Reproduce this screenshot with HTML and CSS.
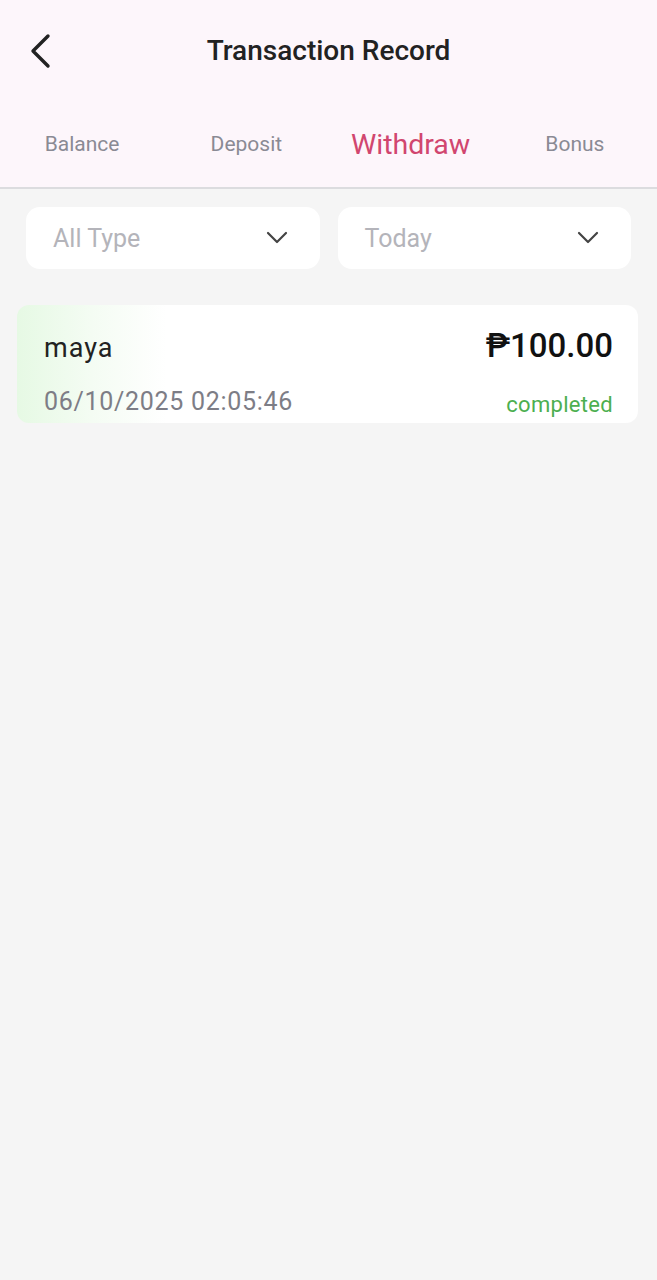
FILE: index.html
```html
<!DOCTYPE html>
<html>
<head>
<meta charset="utf-8">
<link rel="stylesheet" href="styles.css">
</head>
<body>
<header class="header">
  <div class="topbar">
    <button class="back" aria-label="Back">
      <svg width="26" height="36" viewBox="0 0 26 36"><path d="M20 3 L5 18 L20 33" fill="none" stroke="#222" stroke-width="3.4" stroke-linecap="round" stroke-linejoin="round"/></svg>
    </button>
    <h1 class="title">Transaction Record</h1>
  </div>
  <nav class="tabs">
    <span class="tab">Balance</span>
    <span class="tab">Deposit</span>
    <span class="tab active">Withdraw</span>
    <span class="tab">Bonus</span>
  </nav>
</header>
<main class="content">
  <div class="filters">
    <div class="select"><span>All Type</span><svg width="22" height="14" viewBox="0 0 22 14"><path d="M2 2 L11 11 L20 2" fill="none" stroke="#444" stroke-width="2.2" stroke-linecap="round" stroke-linejoin="round"/></svg></div>
    <div class="select"><span>Today</span><svg width="22" height="14" viewBox="0 0 22 14"><path d="M2 2 L11 11 L20 2" fill="none" stroke="#444" stroke-width="2.2" stroke-linecap="round" stroke-linejoin="round"/></svg></div>
  </div>
  <div class="card">
    <div class="row">
      <span class="name">maya</span>
      <span class="amount">₱100.00</span>
    </div>
    <div class="row row2">
      <span class="date">06/10/2025 02:05:46</span>
      <span class="status">completed</span>
    </div>
  </div>
</main>
</body>
</html>
```
FILE: styles.css
```css
* { box-sizing: border-box; }
html, body { margin: 0; padding: 0; }
body {
  width: 657px;
  min-height: 1280px;
  background: #f5f5f5;
  font-family: Roboto, "Liberation Sans", sans-serif;
  color: #222;
}
.header {
  background: #fdf6fb;
  height: 189px;
  border-bottom: 2px solid #dcdcdf;
}
.topbar {
  position: relative;
  height: 100px;
  display: flex;
  align-items: center;
  justify-content: center;
}
.back {
  position: absolute;
  left: 26px;
  top: 33px;
  background: none;
  border: none;
  padding: 0;
  width: 30px;
  height: 36px;
  display: flex;
  align-items: center;
  justify-content: center;
}
.title {
  margin: 0;
  font-size: 28px;
  font-weight: 500;
  color: #222;
}
.tabs {
  display: grid;
  grid-template-columns: repeat(4, 1fr);
  align-items: center;
  height: 87px;
  padding-top: 1px;
}
.tab {
  text-align: center;
  font-size: 21px;
  color: #8a8a94;
}
.tab.active {
  font-size: 28.5px;
  color: #d1466f;
}
.content {
  padding: 18px 19px 0 17px;
}
.filters {
  display: grid;
  grid-template-columns: 1fr 1fr;
  gap: 18px;
  padding: 0 7px 0 9px;
}
.select {
  height: 62px;
  background: #fff;
  border-radius: 14px;
  display: flex;
  align-items: center;
  justify-content: space-between;
  padding: 0 32px 0 27px;
  font-size: 25px;
  color: #b4b4ba;
}
.card {
  margin-top: 36px;
  background: linear-gradient(90deg, #e6f9e4 0%, #f4fcf3 12%, #ffffff 24%);
  border-radius: 12px;
  height: 118px;
  padding: 21px 25px 0 27px;
}
.row {
  display: flex;
  justify-content: space-between;
  align-items: baseline;
}
.row2 { margin-top: 22px; }
.name {
  font-size: 27px;
  letter-spacing: 1px;
  color: #222;
}
.amount {
  font-size: 33px;
  font-weight: 500;
  color: #111;
}
.date {
  font-size: 25px;
  letter-spacing: 0.7px;
  color: #7d7d86;
}
.status {
  font-size: 22px;
  letter-spacing: 0.3px;
  color: #4caf50;
  position: relative;
  top: 2px;
}
```
